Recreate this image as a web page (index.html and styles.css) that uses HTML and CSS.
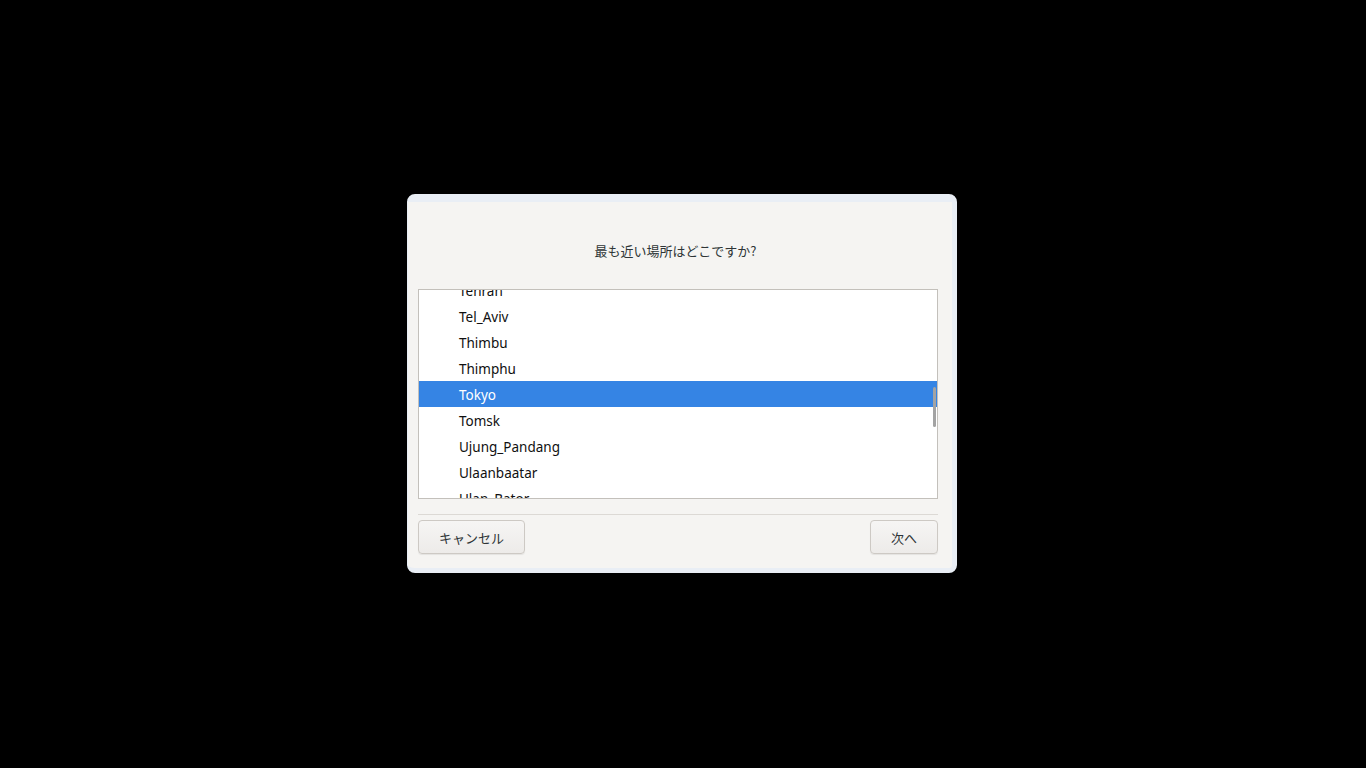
FILE: index.html
```html
<!DOCTYPE html>
<html lang="ja">
<head>
  <meta charset="UTF-8">
  <title>Timezone</title>
  <link rel="stylesheet" href="styles.css">
</head>
<body>
  <div class="dialog">
    <div class="title">最も近い場所はどこですか?</div>

    <div class="list">
      <div class="rows">
        <div class="item">Tehran</div>
        <div class="item">Tel_Aviv</div>
        <div class="item">Thimbu</div>
        <div class="item">Thimphu</div>
        <div class="item selected">Tokyo</div>
        <div class="item">Tomsk</div>
        <div class="item">Ujung_Pandang</div>
        <div class="item">Ulaanbaatar</div>
        <div class="item">Ulan_Bator</div>
      </div>
      <div class="scrollbar"></div>
    </div>

    <div class="separator"></div>

    <div class="actions">
      <button class="btn cancel">キャンセル</button>
      <button class="btn next">次へ</button>
    </div>
  </div>
</body>
</html>
```

FILE: styles.css
```css
html, body {
  margin: 0;
  height: 100%;
}

body {
  background-color: #000;
  display: flex;
  align-items: center;
  justify-content: center;
  font-family: "Noto Sans", "Noto Sans CJK JP", sans-serif;
}

.dialog {
  width: 520px;
  height: 366px;
  margin: -1px 0 0 -2px;
  background-color: #f5f4f2;
  border-style: solid;
  border-color: #e9eef5;
  border-width: 8px 5px 5px 1px;
  border-radius: 8px;
  padding: 0 14px 0 10px;
  display: flex;
  flex-direction: column;
}

.title {
  padding-top: 39px;
  height: 20px;
  line-height: 20px;
  margin: 0 5px 28px 0;
  text-align: center;
  font-family: "Noto Sans CJK JP", sans-serif;
  font-size: 13px;
  color: #2e3436;
}

.list {
  position: relative;
  height: 208px;
  border: 1px solid #c3c0bb;
  background-color: #fff;
  overflow: hidden;
}

.rows {
  margin-top: -13px;
}

.item {
  height: 26px;
  line-height: 28px;
  padding-left: 40px;
  font-size: 13.5px;
  color: #101010;
}

.item.selected {
  background-color: #3584e4;
  color: #fff;
}

.scrollbar {
  position: absolute;
  right: 1px;
  top: 97px;
  width: 3px;
  height: 40px;
  border-radius: 2px;
  background-color: #a3a3a3;
}

.separator {
  margin-top: 15px;
  height: 1px;
  background-color: #dcd9d5;
}

.actions {
  display: flex;
  justify-content: space-between;
  margin-top: 5px;
}

.btn {
  height: 34px;
  padding: 0;
  font-family: "Noto Sans CJK JP", sans-serif;
  font-size: 13px;
  color: #2e3436;
  border: 1px solid #cdc9c4;
  border-radius: 4px;
  background: linear-gradient(#f6f5f4, #edebe9);
  box-shadow: 0 1px 1px rgba(0, 0, 0, 0.07);
}

.cancel {
  width: 107px;
}

.next {
  width: 68px;
}
```
